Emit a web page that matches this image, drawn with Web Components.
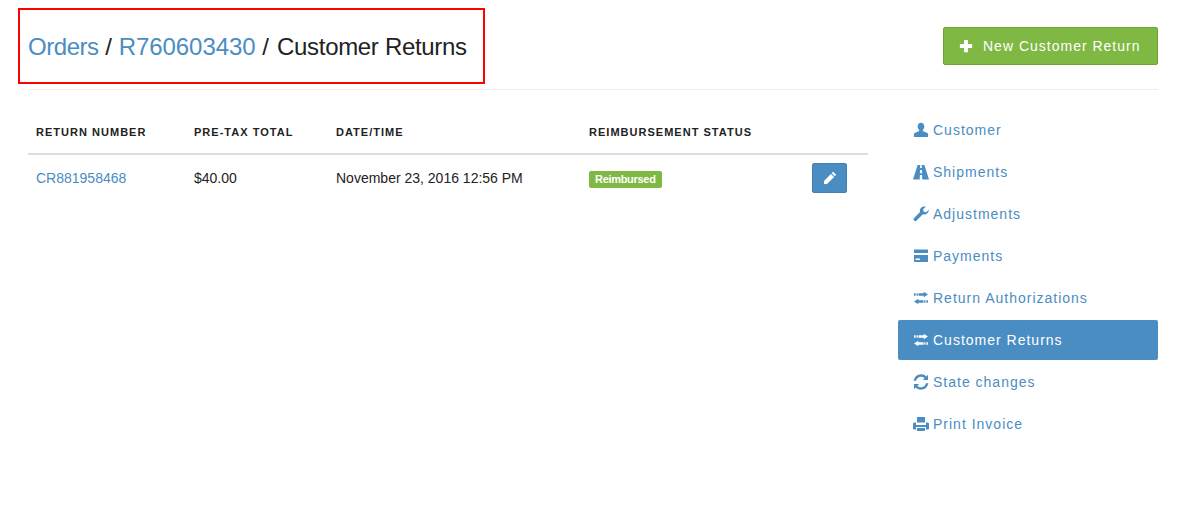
<!DOCTYPE html>
<html lang="en">
<head>
<meta charset="utf-8">
<title>Customer Returns</title>
<style>
html,body{margin:0;background:#fff}
body{font-family:"Liberation Sans",Arial,sans-serif;color:#222;font-size:14px}
</style>
</head>
<body>
<x-page>
  <x-header slot="header" cta="New Customer Return">
    <a href="#" class="first">Orders</a> / <a href="#">R760603430</a> / <span>Customer Returns</span>
  </x-header>
  <x-returns slot="main"></x-returns>
  <x-sidenav slot="side">
    <x-navitem icon="user">Customer</x-navitem>
    <x-navitem icon="road">Shipments</x-navitem>
    <x-navitem icon="wrench">Adjustments</x-navitem>
    <x-navitem icon="card">Payments</x-navitem>
    <x-navitem icon="transfer">Return Authorizations</x-navitem>
    <x-navitem icon="transfer" active>Customer Returns</x-navitem>
    <x-navitem icon="refresh">State changes</x-navitem>
    <x-navitem icon="print">Print Invoice</x-navitem>
  </x-sidenav>
</x-page>
<script>
const ICONS={
 user:'<path d="M8 .8C6 .8 4.700 2.400 4.700 4.500c0 1.500.6 2.800 1.500 3.500v1L1.700 11c-.6.300-.8.800-.8 1.400V15h14.200v-2.600c0-.6-.2-1.100-.8-1.400L9.800 9V8c.9-.7 1.500-2 1.500-3.500C11.300 2.400 10 .8 8 .8z"/>',
 road:'<path fill-rule="evenodd" d="M4.600 1h2.600l-.1 3h1.800l-.1-3h2.600L16 15.500H9.300L9.100 11H6.900l-.2 4.500H0zM7 6l-.1 3.200h2.200L9 6z"/>',
 wrench:'<path d="M15.800 3.700l-2.700 2.600-2.400-.6-.6-2.400L12.800.7c-1.600-.6-3.400-.3-4.700 1-1.200 1.200-1.500 2.900-1.100 4.400L1.100 12c-.8.800-.8 1.900 0 2.600.7.700 1.800.7 2.500 0L9.900 8.300c1.500.4 3.200.1 4.400-1.100 1.200-1.100 1.600-2.900 1.500-3.500z"/>',
 card:'<path fill-rule="evenodd" d="M1.500 1.500h13c.3 0 .5.200.5.500v3H1V2c0-.3.200-.5.500-.5zM1 7h14v6.500c0 .3-.2.500-.5.500h-13c-.3 0-.5-.2-.5-.5zm1.500 3.500V12h4.500v-1.500z"/>',
 transfer:'<path d="M10.700 1.800L15 4.500l-4.300 2.700V5.800H5.500V3.200h5.200zM1 3.200h1.600v2.600H1zm2.500 0h1.300v2.600H3.500zM5.300 8.800v1.400h5.200v2.600H5.300v1.400L1 11.500zM15 10.200h-1.600v2.600H15zm-2.500 0h-1.300v2.600h1.300z"/>',
 refresh:'<path d="M.6 6.800C1.300 3.100 4.400.3 8.100.3c2.100 0 3.900.8 5.300 2.100L15 .8V6H9.800l1.800-1.800C10.600 3.200 9.400 2.700 8.100 2.700c-2.400 0-4.500 1.700-5 4.100z"/><path transform="rotate(180 8 8)" d="M.6 6.800C1.300 3.100 4.400.3 8.100.3c2.100 0 3.900.8 5.300 2.100L15 .8V6H9.800l1.800-1.800C10.600 3.200 9.400 2.700 8.100 2.700c-2.400 0-4.500 1.700-5 4.100z"/>',
 print:'<path fill-rule="evenodd" d="M4 1.500c0-.3.200-.5.500-.5h7c.3 0 .5.200.5.500V6.500H4zM1.500 6.500H3V9h10V6.500h1.500c.8 0 1.500.7 1.500 1.500v4.500c0 .5-.4 1-1 1h-2v-2.500H3V13.500H1c-.6 0-1-.5-1-1V8c0-.8.700-1.500 1.500-1.500zM4 12h8v3H4z"/>',
 pencil:'<path d="M11.600.9l3.500 3.500-1.700 1.700-3.500-3.500zM9.100 3.400l3.500 3.500-7.700 7.700L.9 15.100l.5-4z"/>',
 plus:'<path d="M5.800 1h4.400v4.800H15v4.400h-4.800V15H5.800v-4.800H1V5.800h4.800z"/>'
};
const svg=(n,s)=>`<svg width="${s}" height="${s}" viewBox="0 0 16 16" fill="currentColor" aria-hidden="true">${ICONS[n]}</svg>`;
function def(name,html){
  customElements.define(name,class extends HTMLElement{
    constructor(){super();this.attachShadow({mode:'open'});}
    connectedCallback(){this.shadowRoot.innerHTML=typeof html==='function'?html(this):html;}
  });
}
def('x-page',`<style>
:host{display:block;padding:0 30px 0 28px}
.cols{display:flex;gap:30px;padding-top:20px}
.main{flex:0 0 840px}
.side{flex:0 0 260px}
</style>
<slot name="header"></slot>
<div class="cols"><div class="main"><slot name="main"></slot></div><div class="side"><slot name="side"></slot></div></div>`);

def('x-header',el=>`<style>
:host{display:block;position:relative;height:89px;border-bottom:1px solid #eee}
.row{display:flex;justify-content:space-between;align-items:center;height:89px}
h1{margin:5px 0 0;font:400 24px/30px "Liberation Sans",Arial,sans-serif;color:#222}
::slotted(a){color:#4a8dc3;text-decoration:none;letter-spacing:-.06px}
::slotted(a.first){letter-spacing:-.45px}
::slotted(span){letter-spacing:-.32px;margin-left:1.5px}
.mark{position:absolute;left:-10px;top:8px;width:463px;height:72px;border:2px solid #f00;pointer-events:none}
x-button{margin-top:3px}
</style>
<div class="row"><h1><slot></slot></h1><x-button icon="plus">${el.getAttribute('cta')}</x-button></div>
<div class="mark"></div>`);

def('x-button',el=>`<style>
:host{display:block}
a{display:flex;align-items:center;box-sizing:border-box;width:215px;height:38px;padding:0 0 0 15px;gap:10px;background:#7fb842;border:1px solid #6da534;border-radius:2px;color:#fff;font:400 14px "Liberation Sans",Arial,sans-serif;letter-spacing:1px;text-decoration:none}
svg{display:block;flex:none}
</style><a href="#">${svg(el.getAttribute('icon'),14)}<slot></slot></a>`);

def('x-badge',`<style>
:host{display:inline-block;background:#7fb842;color:#fff;font:700 11px/17px "Liberation Sans",Arial,sans-serif;letter-spacing:-.3px;padding:0 6px;border-radius:2px;height:17px}
</style><slot></slot>`);

def('x-returns',`<style>
:host{display:block}
table{border-collapse:collapse;table-layout:fixed;width:840px;font:14px/20px "Liberation Sans",Arial,sans-serif;color:#222}
th{font-weight:700;font-size:11px;letter-spacing:1.02px;text-transform:uppercase;text-align:left;padding:0 8px;height:44px;border-bottom:2px solid #ddd;box-sizing:border-box;color:#222;white-space:nowrap}
td{padding:0 8px;height:46px;vertical-align:middle}
td>*{vertical-align:middle}
a.link{color:#4a8dc3;text-decoration:none}
a.edit{display:flex;align-items:center;justify-content:center;width:35px;height:30px;margin:0 0 0 23px;background:#4a8dc3;border:1px solid #4180b5;box-sizing:border-box;border-radius:2px;color:#fff}
</style>
<table>
<colgroup><col style="width:158px"><col style="width:142px"><col style="width:253px"><col style="width:200px"><col></colgroup>
<thead><tr><th>Return Number</th><th>Pre-Tax Total</th><th>Date/Time</th><th>Reimbursement Status</th><th></th></tr></thead>
<tbody><tr>
<td><a class="link" href="#">CR881958468</a></td>
<td>$40.00</td>
<td>November 23, 2016 12:56 PM</td>
<td><x-badge>Reimbursed</x-badge></td>
<td><a class="edit" href="#" aria-label="Edit">${svg('pencil',14)}</a></td>
</tr></tbody>
</table>`);

def('x-sidenav',`<style>
:host{display:flex;flex-direction:column;gap:2px}
</style><slot></slot>`);

def('x-navitem',el=>{
 const on=el.hasAttribute('active');
 return `<style>
:host{display:block}
a{display:flex;align-items:center;gap:4px;height:40px;padding-left:15px;border-radius:2px;font:400 14px "Liberation Sans",Arial,sans-serif;letter-spacing:1px;text-decoration:none;color:${on?'#fff':'#4a8dc3'};background:${on?'#4a8dc3':'transparent'}}
svg{display:block;flex:none}
</style><a href="#">${svg(el.getAttribute('icon'),16)}<slot></slot></a>`;
});
</script>
</body>
</html>
